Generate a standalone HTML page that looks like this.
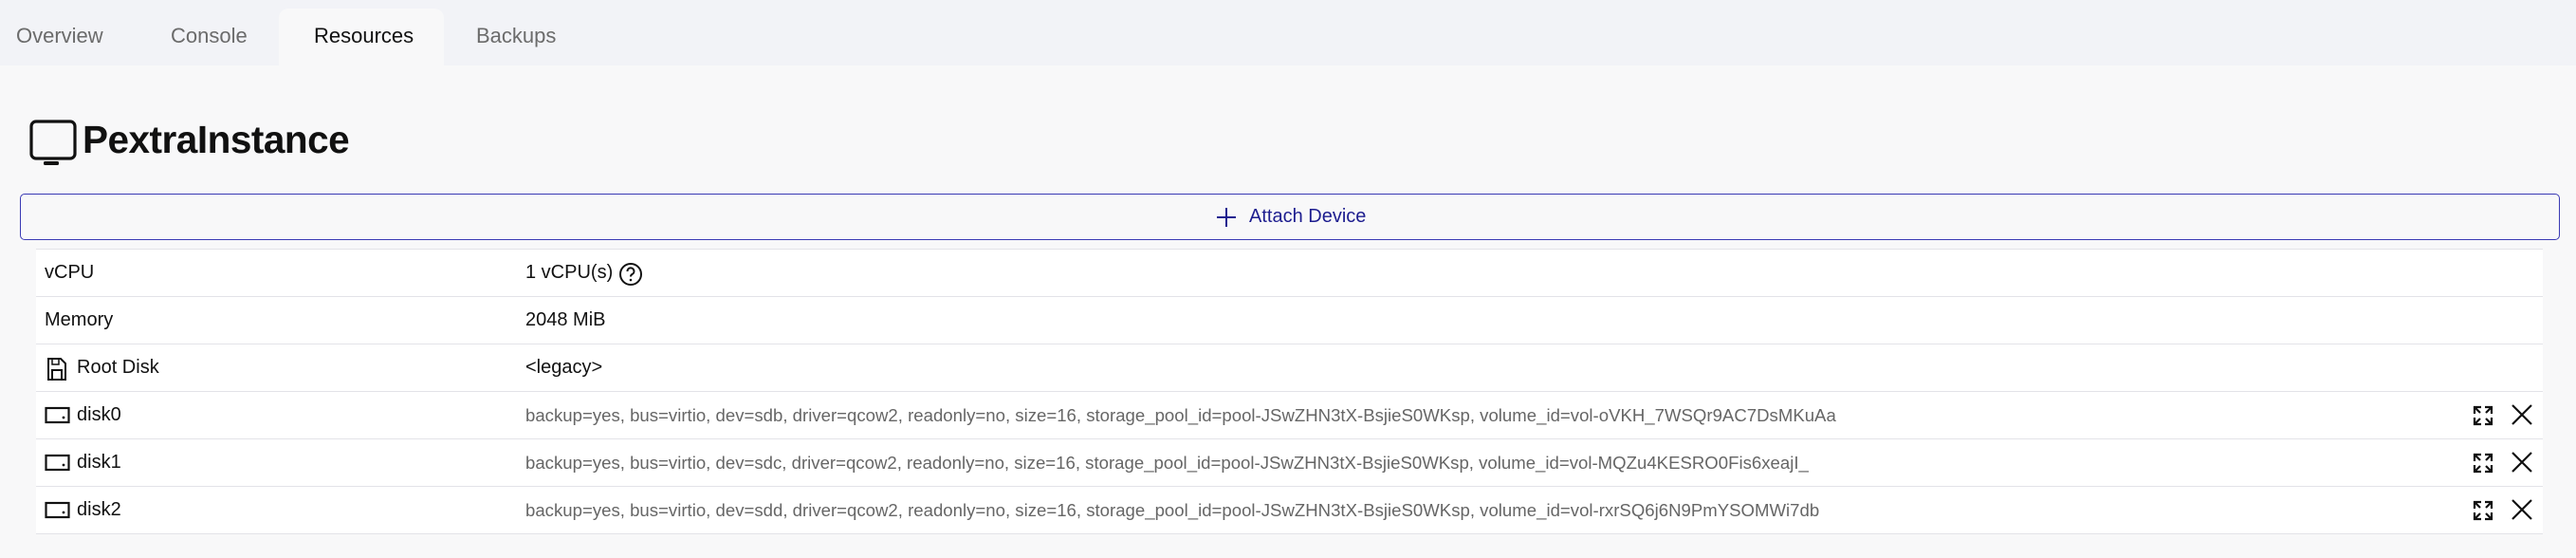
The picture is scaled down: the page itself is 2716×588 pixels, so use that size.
<!DOCTYPE html>
<html><head><meta charset="utf-8"><style>
*{margin:0;padding:0;box-sizing:border-box}
body{width:2716px;height:588px;background:#f8f8f9;font-family:"Liberation Sans",sans-serif;color:#111;position:relative;overflow:hidden}
.tabs{position:absolute;left:0;top:0;width:2716px;height:69px;background:#f2f3f7}
.tab{position:absolute;top:25px;font-size:22px;color:#6b6b6b}
.active{position:absolute;left:294px;top:9px;width:174px;height:60px;background:#f8f8f9;border-radius:10px 10px 0 0}
.title{position:absolute;left:87px;top:124px;font-size:40.5px;font-weight:bold;letter-spacing:-0.5px}
.btn{position:absolute;left:21px;top:204px;width:2678px;height:49px;border:1.5px solid #3a3ab4;border-radius:5px;background:#f8f8f9}
.btn span{position:absolute;left:1295px;top:12px;font-size:20px;color:#1d1d8f}
.table{position:absolute;left:38px;top:262px;width:2643px;background:#fff;border-top:1.5px solid #e3e3e8}
.row{position:relative;height:50px;border-bottom:1.5px solid #e3e3e8}
.lab{position:absolute;left:9px;top:13px;font-size:20px}
.lab.i{left:43px}
.val{position:absolute;left:516px;top:13px;font-size:20px}
.dv{position:absolute;left:516px;top:14px;font-size:18.6px;color:#666}
svg{position:absolute}
</style></head><body>
<div class="tabs">
<div class="active"></div>
<div class="tab" style="left:17px">Overview</div>
<div class="tab" style="left:180px">Console</div>
<div class="tab" style="left:331px;color:#111">Resources</div>
<div class="tab" style="left:502px">Backups</div>
</div>
<svg style="left:31px;top:126px" width="52" height="50" viewBox="0 0 52 50"><rect x="2" y="2" width="46" height="39" rx="5" fill="none" stroke="#111" stroke-width="3.2"/><rect x="15" y="44" width="16" height="4" rx="1.5" fill="#111"/></svg>
<div class="title">PextraInstance</div>
<div class="btn"><svg style="left:1260px;top:13px" width="22" height="22" viewBox="0 0 22 22"><path d="M11 1V21M1 11H21" stroke="#1d1d8f" stroke-width="2"/></svg><span>Attach Device</span></div>
<div class="table">
<div class="row"><div class="lab">vCPU</div><div class="val">1 vCPU(s)</div><svg style="left:614px;top:13px" width="26" height="26" viewBox="0 0 26 26"><circle cx="13" cy="13" r="11" fill="none" stroke="#111" stroke-width="2"/><path d="M9.5 10a3.5 3.5 0 1 1 5 3c-1 .6-1.5 1.2-1.5 2.5" fill="none" stroke="#111" stroke-width="2"/><circle cx="13" cy="19" r="1.3" fill="#111"/></svg></div>
<div class="row"><div class="lab">Memory</div><div class="val">2048 MiB</div></div>
<div class="row"><svg style="left:11px;top:13px" width="22" height="26" viewBox="0 0 22 26"><path d="M2 2H15L20 7V24H2Z" fill="none" stroke="#111" stroke-width="2"/><rect x="6" y="14" width="10" height="10" fill="none" stroke="#111" stroke-width="2"/><path d="M6 3V8H13V3" fill="none" stroke="#111" stroke-width="1.5"/></svg><div class="lab i">Root Disk</div><div class="val">&lt;legacy&gt;</div></div>
<div class="row"><svg style="left:9px;top:15px" width="28" height="20" viewBox="0 0 28 20"><rect x="1.5" y="2" width="24" height="15" fill="none" stroke="#111" stroke-width="2.2"/><circle cx="20" cy="12" r="1.4" fill="#111"/></svg><div class="lab i">disk0</div><div class="dv">backup=yes, bus=virtio, dev=sdb, driver=qcow2, readonly=no, size=16, storage_pool_id=pool-JSwZHN3tX-BsjieS0WKsp, volume_id=vol-oVKH_7WSQr9AC7DsMKuAa</div>
<svg style="left:2568px;top:13px" width="24" height="24" viewBox="0 0 24 24"><path d="M3 10V3H10M3 3L9 9M14 3H21V10M21 3L15 9M3 14V21H10M3 21L9 15M21 14V21H14M21 21L15 15" fill="none" stroke="#111" stroke-width="2.2"/></svg><svg style="left:2608px;top:11px" width="26" height="26" viewBox="0 0 26 26"><path d="M3 3L23 23M23 3L3 23" stroke="#111" stroke-width="2.2"/></svg></div>
<div class="row"><svg style="left:9px;top:15px" width="28" height="20" viewBox="0 0 28 20"><rect x="1.5" y="2" width="24" height="15" fill="none" stroke="#111" stroke-width="2.2"/><circle cx="20" cy="12" r="1.4" fill="#111"/></svg><div class="lab i">disk1</div><div class="dv">backup=yes, bus=virtio, dev=sdc, driver=qcow2, readonly=no, size=16, storage_pool_id=pool-JSwZHN3tX-BsjieS0WKsp, volume_id=vol-MQZu4KESRO0Fis6xeajI_</div>
<svg style="left:2568px;top:13px" width="24" height="24" viewBox="0 0 24 24"><path d="M3 10V3H10M3 3L9 9M14 3H21V10M21 3L15 9M3 14V21H10M3 21L9 15M21 14V21H14M21 21L15 15" fill="none" stroke="#111" stroke-width="2.2"/></svg><svg style="left:2608px;top:11px" width="26" height="26" viewBox="0 0 26 26"><path d="M3 3L23 23M23 3L3 23" stroke="#111" stroke-width="2.2"/></svg></div>
<div class="row"><svg style="left:9px;top:15px" width="28" height="20" viewBox="0 0 28 20"><rect x="1.5" y="2" width="24" height="15" fill="none" stroke="#111" stroke-width="2.2"/><circle cx="20" cy="12" r="1.4" fill="#111"/></svg><div class="lab i">disk2</div><div class="dv">backup=yes, bus=virtio, dev=sdd, driver=qcow2, readonly=no, size=16, storage_pool_id=pool-JSwZHN3tX-BsjieS0WKsp, volume_id=vol-rxrSQ6j6N9PmYSOMWi7db</div>
<svg style="left:2568px;top:13px" width="24" height="24" viewBox="0 0 24 24"><path d="M3 10V3H10M3 3L9 9M14 3H21V10M21 3L15 9M3 14V21H10M3 21L9 15M21 14V21H14M21 21L15 15" fill="none" stroke="#111" stroke-width="2.2"/></svg><svg style="left:2608px;top:11px" width="26" height="26" viewBox="0 0 26 26"><path d="M3 3L23 23M23 3L3 23" stroke="#111" stroke-width="2.2"/></svg></div>
</div>
</body></html>
